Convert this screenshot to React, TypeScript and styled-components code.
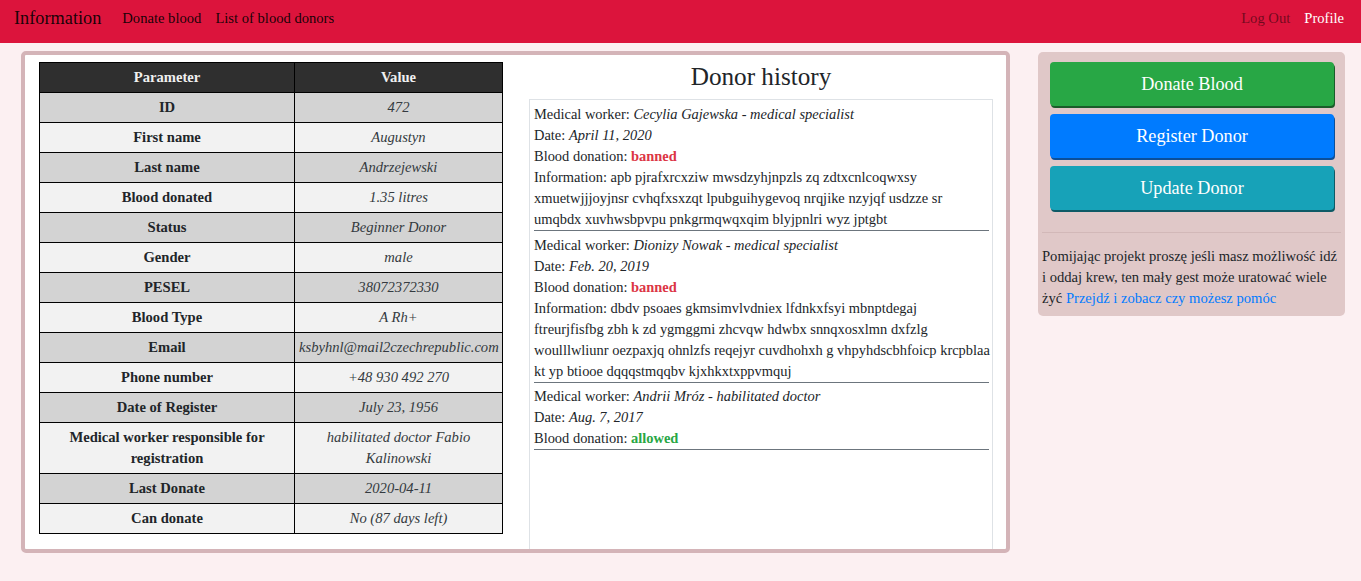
import React from "react";
import styled, { createGlobalStyle } from "styled-components";

const GlobalStyle = createGlobalStyle`
  html, body {
    margin: 0;
    padding: 0;
  }
  body {
    background: #fcf0f2;
    font-family: "Liberation Serif", "Times New Roman", serif;
    font-size: 14.6px;
    line-height: 21px;
    color: #212529;
  }
  * { box-sizing: border-box; }
`;

const Navbar = styled.nav`
  height: 43px;
  background: #dc143c;
  display: flex;
  align-items: center;
  padding: 0 10px 7px 14px;
`;

const Brand = styled.a`
  font-size: 18.3px;
  color: rgba(0, 0, 0, 0.9);
  margin-right: 14px;
  line-height: 26px;
  text-decoration: none;
`;

const NavLink = styled.a<{ $tone?: "dark" | "muted" | "active" }>`
  padding: 0 7px;
  font-size: 14.6px;
  line-height: 21px;
  text-decoration: none;
  color: ${(p) =>
    p.$tone === "active" ? "#ffffff" : p.$tone === "muted" ? "rgba(0,0,0,0.5)" : "rgba(0,0,0,0.9)"};
`;

const Spacer = styled.div`
  flex: 1;
`;

const Page = styled.main`
  display: flex;
  align-items: flex-start;
  padding: 8px 16px 0 21px;
  gap: 28px;
`;

const Card = styled.section`
  flex: none;
  width: 989px;
  height: 502px;
  background: #ffffff;
  border: 4px solid #d4b4b8;
  border-radius: 5px;
  padding: 7px 13px 0 14px;
  display: grid;
  grid-template-columns: 463px 464px;
  column-gap: 27px;
`;

const Table = styled.table`
  width: 463px;
  table-layout: fixed;
  border-collapse: collapse;
  align-self: start;
`;

const HeadCell = styled.th`
  background: #2f2f2f;
  color: #f0f0f0;
  font-weight: bold;
  border: 1px solid #000;
  padding: 4px;
  line-height: 21px;
  text-align: center;
`;

const Row = styled.tr`
  &:nth-child(odd) td { background: #d3d3d3; }
  &:nth-child(even) td { background: #f2f2f2; }
`;

const ParamCell = styled.td`
  border: 1px solid #000;
  padding: 4px;
  line-height: 21px;
  text-align: center;
  font-weight: bold;
  color: #212529;
`;

const ValueCell = styled.td`
  border: 1px solid #000;
  padding: 4px;
  line-height: 21px;
  text-align: center;
  font-style: italic;
  color: #343a40;
`;

const HistoryColumn = styled.div`
  display: flex;
  flex-direction: column;
  min-height: 0;
`;

const Title = styled.h3`
  margin: 0 0 7.6px;
  font-size: 25.2px;
  font-weight: normal;
  line-height: 29.4px;
  text-align: center;
  color: #212529;
`;

const HistoryBox = styled.div`
  flex: 1;
  border: 1px solid #dee2e6;
  border-bottom: none;
  padding: 4px 3px 0 4px;
  overflow: hidden;
  font-size: 14.45px;
`;

const Entry = styled.div`
  border-bottom: 1px solid #6c757d;
  margin-bottom: 3.5px;
`;

const Line = styled.div`
  line-height: 21px;
  white-space: nowrap;
`;

const Em = styled.i``;

const Status = styled.b<{ $ok: boolean }>`
  color: ${(p) => (p.$ok ? "#28a745" : "#dc3545")};
`;

const Sidebar = styled.aside`
  flex: none;
  width: 307px;
  margin-top: 1px;
  background: #e0c8c8;
  border-radius: 5px;
  padding: 0 4px 6.5px;
`;

const ButtonGroup = styled.div`
  display: flex;
  flex-direction: column;
  gap: 8px;
  padding: 10px 7px 0 8px;
`;

const ActionButton = styled.button<{ $bg: string; $shade: string }>`
  height: 44px;
  width: 100%;
  border: none;
  border-radius: 4px;
  background: ${(p) => p.$bg};
  box-shadow: 1px 2px 0 ${(p) => p.$shade};
  color: #ffffff;
  font-family: "Liberation Serif", "Times New Roman", serif;
  font-size: 18.2px;
  cursor: pointer;
`;

const Divider = styled.hr`
  border: none;
  border-top: 1px solid #d2b8b8;
  margin: 22px 0 13px;
`;

const Note = styled.p`
  margin: 0;
  line-height: 21px;
  color: #212529;
`;

const Link = styled.a`
  color: #007bff;
  text-decoration: none;
`;

const rows: [string, string][] = [
  ["ID", "472"],
  ["First name", "Augustyn"],
  ["Last name", "Andrzejewski"],
  ["Blood donated", "1.35 litres"],
  ["Status", "Beginner Donor"],
  ["Gender", "male"],
  ["PESEL", "38072372330"],
  ["Blood Type", "A Rh+"],
  ["Email", "ksbyhnl@mail2czechrepublic.com"],
  ["Phone number", "+48 930 492 270"],
  ["Date of Register", "July 23, 1956"],
  ["Medical worker responsible for registration", "habilitated doctor Fabio Kalinowski"],
  ["Last Donate", "2020-04-11"],
  ["Can donate", "No (87 days left)"],
];

type HistoryItem = {
  worker: string;
  role: string;
  date: string;
  allowed: boolean;
  info?: string[];
};

const history: HistoryItem[] = [
  {
    worker: "Cecylia Gajewska",
    role: "medical specialist",
    date: "April 11, 2020",
    allowed: false,
    info: [
      "apb pjrafxrcxziw mwsdzyhjnpzls zq zdtxcnlcoqwxsy",
      "xmuetwjjjoyjnsr cvhqfxsxzqt lpubguihygevoq nrqjike nzyjqf usdzze sr",
      "umqbdx xuvhwsbpvpu pnkgrmqwqxqim blyjpnlri wyz jptgbt",
    ],
  },
  {
    worker: "Dionizy Nowak",
    role: "medical specialist",
    date: "Feb. 20, 2019",
    allowed: false,
    info: [
      "dbdv psoaes gkmsimvlvdniex lfdnkxfsyi mbnptdegaj",
      "ftreurjfisfbg zbh k zd ygmggmi zhcvqw hdwbx snnqxosxlmn dxfzlg",
      "woulllwliunr oezpaxjq ohnlzfs reqejyr cuvdhohxh g vhpyhdscbhfoicp krcpblaa",
      "kt yp btiooe dqqqstmqqbv kjxhkxtxppvmquj",
    ],
  },
  {
    worker: "Andrii Mróz",
    role: "habilitated doctor",
    date: "Aug. 7, 2017",
    allowed: true,
  },
];

export default function App() {
  return (
    <>
      <GlobalStyle />
      <Navbar>
        <Brand href="#">Information</Brand>
        <NavLink href="#">Donate blood</NavLink>
        <NavLink href="#">List of blood donors</NavLink>
        <Spacer />
        <NavLink href="#" $tone="muted">Log Out</NavLink>
        <NavLink href="#" $tone="active">Profile</NavLink>
      </Navbar>
      <Page>
        <Card>
          <Table>
            <colgroup>
              <col style={{ width: 255 }} />
              <col style={{ width: 208 }} />
            </colgroup>
            <thead>
              <tr>
                <HeadCell>Parameter</HeadCell>
                <HeadCell>Value</HeadCell>
              </tr>
            </thead>
            <tbody>
              {rows.map(([k, v]) => (
                <Row key={k}>
                  <ParamCell>{k}</ParamCell>
                  <ValueCell>{v}</ValueCell>
                </Row>
              ))}
            </tbody>
          </Table>
          <HistoryColumn>
            <Title>Donor history</Title>
            <HistoryBox>
              {history.map((h) => (
                <Entry key={h.date}>
                  <Line>
                    Medical worker: <Em>{h.worker} - {h.role}</Em>
                  </Line>
                  <Line>
                    Date: <Em>{h.date}</Em>
                  </Line>
                  <Line>
                    Blood donation: <Status $ok={h.allowed}>{h.allowed ? "allowed" : "banned"}</Status>
                  </Line>
                  {h.info && (
                    <Line>
                      Information:{" "}
                      {h.info.map((part, i) => (
                        <React.Fragment key={i}>
                          {i > 0 && <br />}
                          {part}
                        </React.Fragment>
                      ))}
                    </Line>
                  )}
                </Entry>
              ))}
            </HistoryBox>
          </HistoryColumn>
        </Card>
        <Sidebar>
          <ButtonGroup>
            <ActionButton $bg="#28a745" $shade="#1a5c2a">Donate Blood</ActionButton>
            <ActionButton $bg="#007bff" $shade="#0b4f9a">Register Donor</ActionButton>
            <ActionButton $bg="#17a2b8" $shade="#0e5a66">Update Donor</ActionButton>
          </ButtonGroup>
          <Divider />
          <Note>
            Pomijając projekt proszę jeśli masz możliwość idź i oddaj krew, ten mały gest może
            uratować wiele żyć <Link href="#">Przejdź i zobacz czy możesz pomóc</Link>
          </Note>
        </Sidebar>
      </Page>
    </>
  );
}
